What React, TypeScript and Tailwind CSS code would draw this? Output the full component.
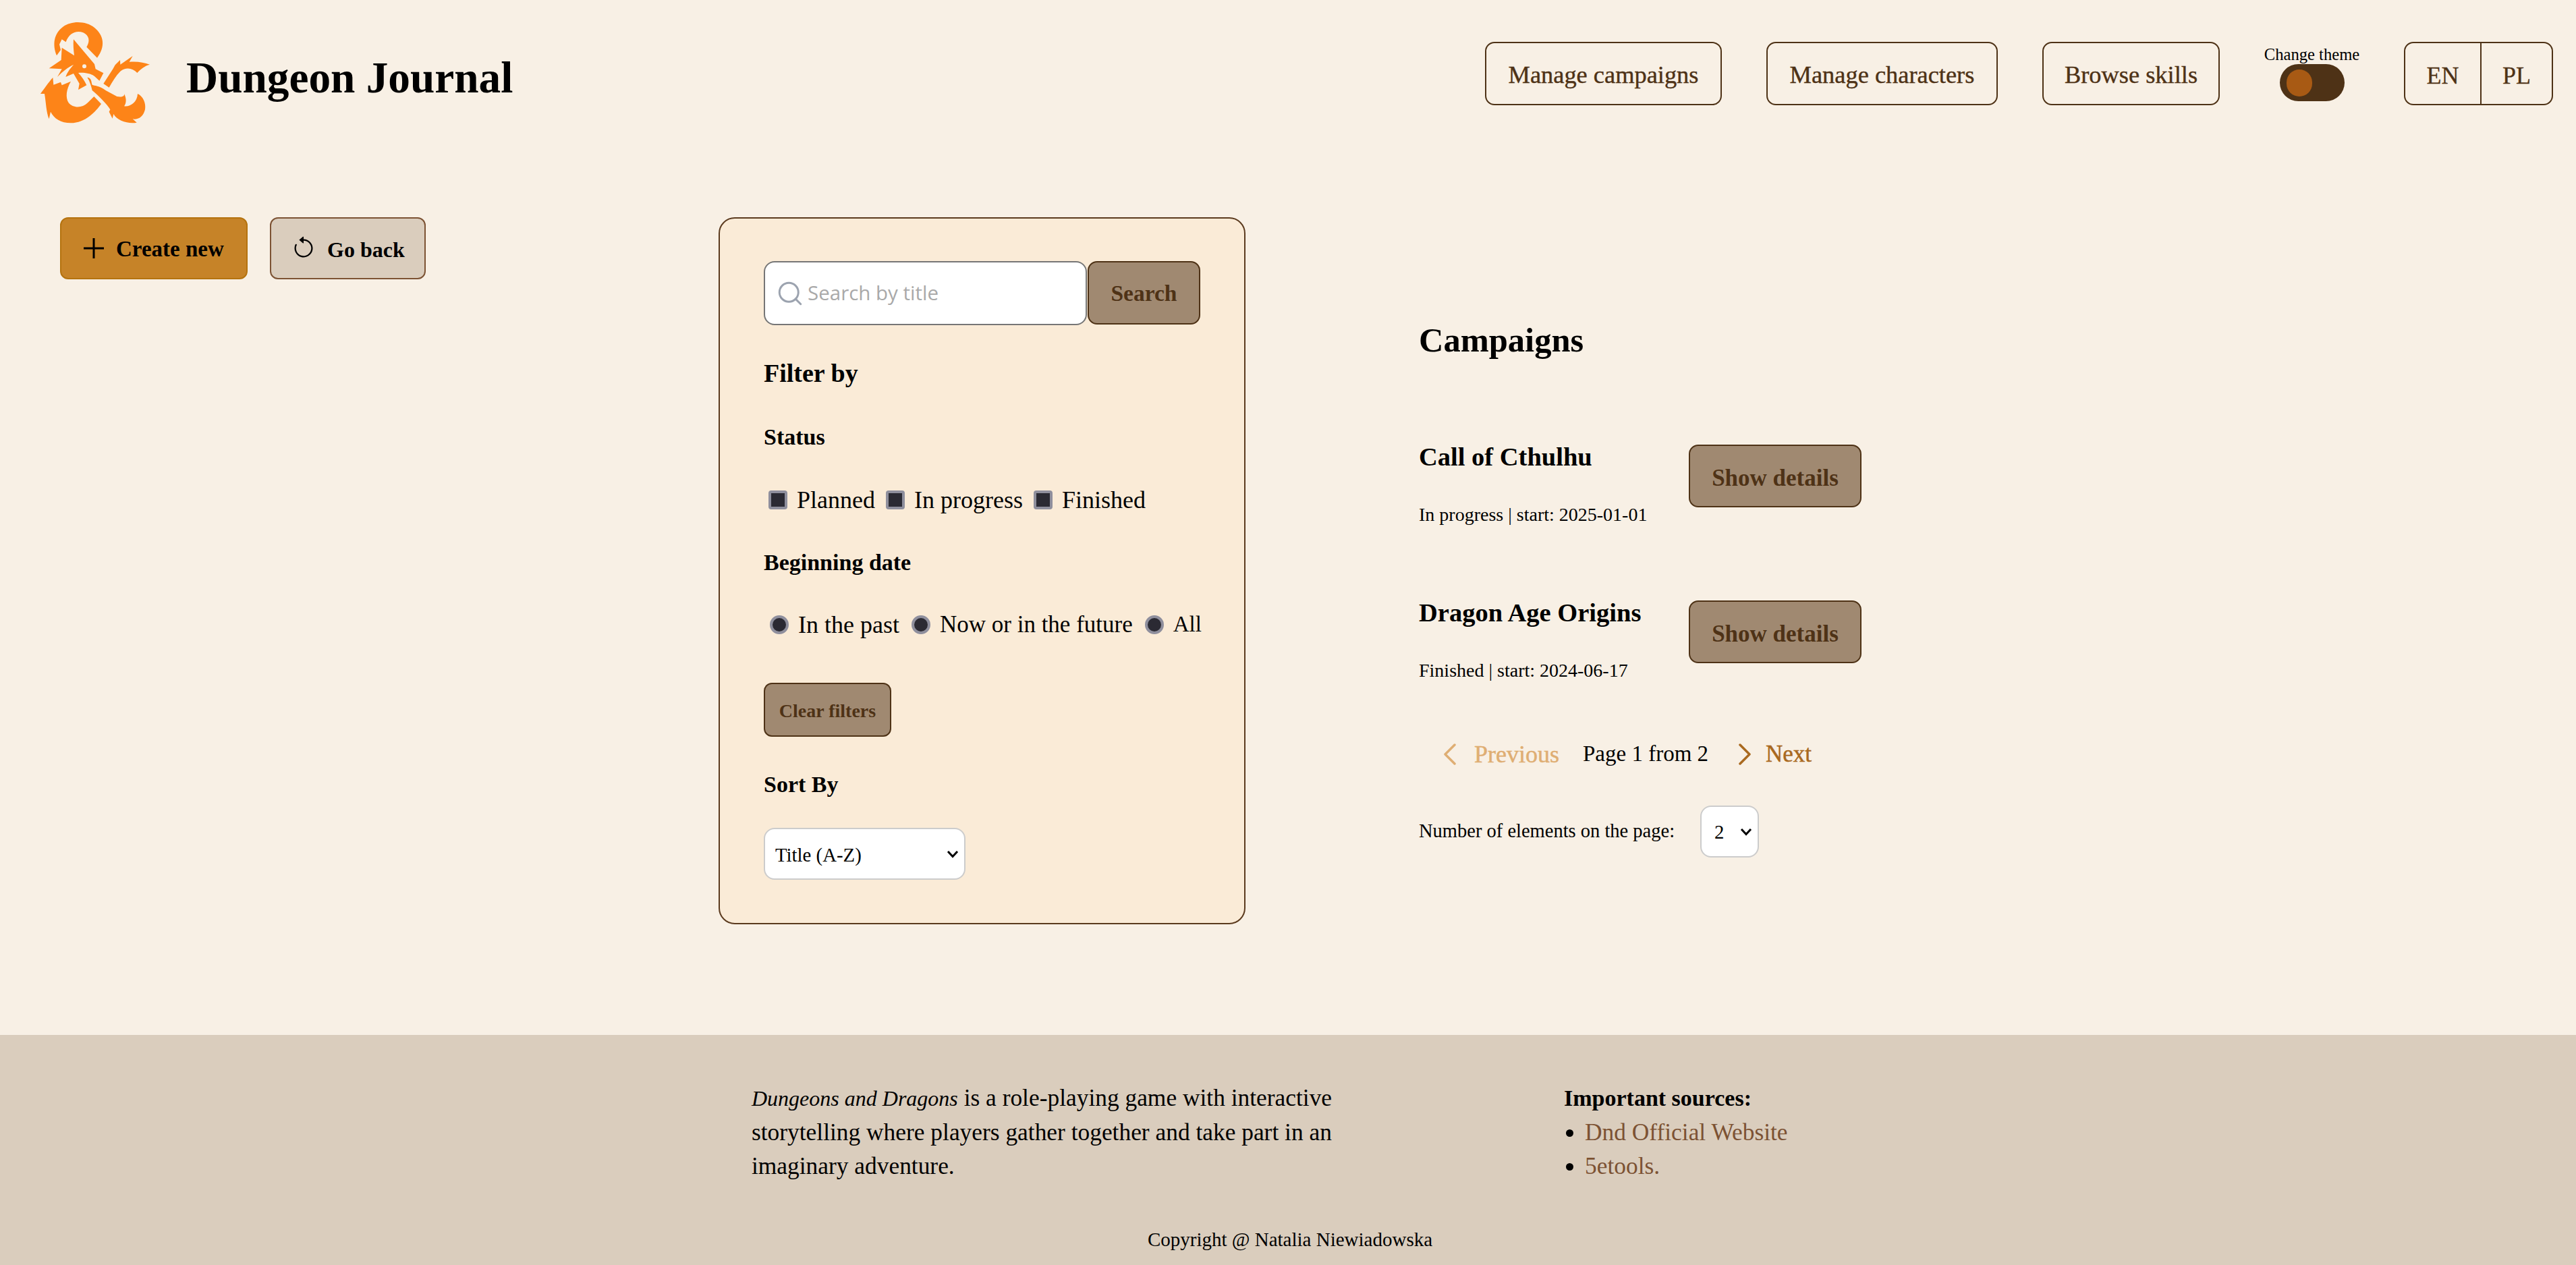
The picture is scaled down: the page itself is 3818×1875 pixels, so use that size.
import React from "react";
import { Search } from "lucide-react";
import { BsArrowCounterclockwise } from "react-icons/bs";

function Logo() {
  return (
    <svg width="200" height="180" viewBox="0 0 600 540" className="shrink-0" fill="#fd8418">
      <path d="M132 190C112 140 120 92 160 62C200 34 262 36 300 66C342 100 350 150 312 200L265 152C282 125 276 100 250 88C220 76 186 90 173 130L155 118L144 140L150 165Z" />
      <path d="M207 118L300 228L305 250L340 268L322 302L300 282C280 268 252 265 228 267C245 285 256 302 265 322L228 342L233 315L207 270L172 285C180 262 195 245 207 231C185 240 160 260 135 285L155 250L98 247L152 210L155 155L210 190C207 165 205 140 207 118Z" />
      <path d="M115 288L118 320L150 308L155 322L195 305C175 340 170 375 185 400C205 425 245 425 270 400L298 372L330 405C305 440 260 490 195 490C150 490 120 470 105 440L98 472C85 440 85 400 78 360L60 360C75 340 95 310 115 288Z" />
      <path d="M268 287C290 290 285 310 290 320C300 325 320 322 350 345L400 372C420 376 435 372 432 360C445 385 440 405 432 415C455 420 490 400 492 360C515 370 530 400 525 430C518 460 495 478 470 472L488 488C450 495 400 480 385 450L380 470L365 440L370 430C355 405 320 370 290 345C285 325 280 305 268 287Z" />
      <path d="M340 315L382 250L392 232L414 210L415 230L470 192L455 218C490 215 520 220 546 230C525 235 505 250 490 267C470 245 440 240 415 260C395 280 380 305 365 332Z" />
      <circle cx="255" cy="238" r="9" fill="#f8f0e5" />
    </svg>
  );
}

function Plus() {
  return (
    <svg width="32" height="32" viewBox="0 0 32 32" className="shrink-0">
      <path d="M16 1V31M1 16H31" stroke="#000" strokeWidth="3" />
    </svg>
  );
}

function Chevron({ left, color }: { left?: boolean; color: string }) {
  return (
    <svg width="20" height="32" viewBox="0 0 20 32" className="shrink-0">
      <path d={left ? "M17 2L3 16L17 30" : "M3 2L17 16L3 30"} fill="none" stroke={color} strokeWidth="3.5" strokeLinecap="round" strokeLinejoin="round" />
    </svg>
  );
}

function SelectArrow() {
  return (
    <svg width="18" height="12" viewBox="0 0 18 12" className="pointer-events-none absolute right-[10px] top-[33px]">
      <path d="M2 2L9 9.5L16 2" fill="none" stroke="#000" strokeWidth="3" />
    </svg>
  );
}

function NavButton({ label, w }: { label: string; w: string }) {
  return (
    <button className={`${w} h-[94px] rounded-[14px] border-2 border-[#4e3216] pt-[5px] text-[36.4px] leading-none text-[#4e3216] [-webkit-text-stroke:0.4px]`}>
      {label}
    </button>
  );
}

function Check({ label, first }: { label: string; first?: boolean }) {
  return (
    <label className={`flex items-center gap-[14px] ${first ? "" : "ml-[16px]"}`}>
      <input type="checkbox" defaultChecked className="h-[28px] w-[28px] appearance-none rounded-[4px] border-[4px] border-[#8f8f9d] bg-[#2b2a33]" />
      <span>{label}</span>
    </label>
  );
}

function Radio({ label, size, first }: { label: string; size: string; first?: boolean }) {
  return (
    <label className={`flex items-center gap-[14px] ${first ? "" : "ml-[18px]"}`}>
      <input type="radio" defaultChecked className="h-[28px] w-[28px] appearance-none rounded-full border-[4px] border-[#8f8f9d] bg-[#2b2a33]" />
      <span className={size}>{label}</span>
    </label>
  );
}

function Campaign({ title, sub, className }: { title: string; sub: string; className: string }) {
  return (
    <div className={`flex items-start ${className}`}>
      <div className="w-[400px] shrink-0">
        <h3 className="text-[38.5px] font-bold leading-[50px] whitespace-nowrap">{title}</h3>
        <p className="mt-[41px] text-[28px] leading-[40px] whitespace-nowrap">{sub}</p>
      </div>
      <button className="mt-[7px] h-[93px] w-[256px] rounded-[14px] border-2 border-[#4e3216] bg-[#a08971] pt-[7px] text-[35px] font-bold text-[#4e3216]">
        Show details
      </button>
    </div>
  );
}

export default function App() {
  return (
    <div className="flex h-[1875px] flex-col bg-[#f8f0e5] font-['Liberation_Serif',serif] text-black">
      <header className="flex h-[218px] shrink-0 items-center justify-between pl-[40px] pr-[34px]">
        <div className="flex items-center gap-[36px]">
          <Logo />
          <h1 className="mt-[14px] text-[65.3px] font-bold leading-none whitespace-nowrap">Dungeon Journal</h1>
        </div>
        <nav className="flex items-center gap-[66px]">
          <NavButton label="Manage campaigns" w="w-[351px]" />
          <NavButton label="Manage characters" w="w-[343px]" />
          <NavButton label="Browse skills" w="w-[263px]" />
          <div className="flex w-[141px] flex-col items-center">
            <span className="-mt-[2px] text-[24.6px] leading-[29px] whitespace-nowrap">Change theme</span>
            <div className="flex h-[55px] w-[96px] items-center rounded-full bg-[#4e3216] pl-[10px]">
              <div className="h-[40px] w-[38px] rounded-full bg-[#a85a14]" />
            </div>
          </div>
          <div className="flex h-[94px] w-[221px] rounded-[14px] border-2 border-[#4e3216] text-[36px] text-[#4e3216] [-webkit-text-stroke:0.3px]">
            <button className="w-[113px] border-r-2 border-[#4e3216] pt-[5px]">EN</button>
            <button className="flex-1 pt-[5px]">PL</button>
          </div>
        </nav>
      </header>

      <main className="flex flex-1 items-start pt-[104px]">
        <div className="flex w-[1065px] shrink-0 gap-[33px] pl-[89px]">
          <button className="flex h-[92px] w-[278px] items-center gap-[17px] rounded-[12px] border-2 border-[#b5730f] bg-[#c68328] pl-[32px] text-[33px] font-bold">
            <Plus />
            <span className="pt-[3px]">Create new</span>
          </button>
          <button className="flex h-[92px] w-[231px] items-center gap-[17px] rounded-[12px] border-2 border-[#7c5233] bg-[#dacdbd] pl-[30px] text-[32px] font-bold">
            <BsArrowCounterclockwise size={36} />
            <span className="pt-[3px]">Go back</span>
          </button>
        </div>

        <section className="h-[1048px] w-[781px] shrink-0 rounded-[24px] border-2 border-[#5b3a1e] bg-[#faebd7] px-[65px] pt-[63px]">
          <div className="flex gap-[1px]">
            <div className="flex h-[95px] w-[479px] items-center gap-[5px] rounded-[16px] border-2 border-[#767676] bg-white pl-[16px]">
              <Search size={42} strokeWidth={1.7} color="#9ca3af" className="shrink-0" />
              <span className="font-['Open_Sans',sans-serif] text-[29.5px] text-[#a9a9a9]">Search by title</span>
            </div>
            <button className="h-[94px] w-[167px] rounded-[14px] border-2 border-[#4e3216] bg-[#a08971] pt-[3px] text-[33.5px] font-bold text-[#4e3216]">Search</button>
          </div>
          <h2 className="mt-[46px] text-[38px] font-bold leading-[50px]">Filter by</h2>
          <h3 className="mt-[50px] text-[34px] font-bold leading-[40px]">Status</h3>
          <div className="mt-[53px] flex h-[40px] items-center pl-[7px] text-[36px] whitespace-nowrap">
            <Check label="Planned" first />
            <Check label="In progress" />
            <Check label="Finished" />
          </div>
          <h3 className="mt-[53px] text-[34px] font-bold leading-[40px]">Beginning date</h3>
          <div className="mt-[52px] flex h-[40px] items-center pl-[9px] text-[36px] whitespace-nowrap">
            <Radio label="In the past" size="text-[36px]" first />
            <Radio label="Now or in the future" size="text-[35px]" />
            <Radio label="All" size="text-[33px]" />
          </div>
          <button className="mt-[66px] block h-[80px] w-[189px] rounded-[12px] border-2 border-[#4e3216] bg-[#a08971] pt-[3px] text-[28px] font-bold text-[#4e3216]">Clear filters</button>
          <h3 className="mt-[51px] text-[34px] font-bold leading-[40px]">Sort By</h3>
          <div className="relative mt-[44px] h-[77px] w-[299px]">
            <select className="block h-[77px] w-[299px] appearance-none rounded-[16px] border-2 border-[#cccccc] bg-white pl-[15px] pt-[5px] text-[28.8px]">
              <option>Title (A-Z)</option>
            </select>
            <SelectArrow />
          </div>
        </section>

        <section className="ml-[257px] pt-[152px]">
          <h2 className="text-[50.5px] font-bold leading-[60px]">Campaigns</h2>
          <Campaign className="mt-[118px]" title="Call of Cthulhu" sub="In progress | start: 2025-01-01" />
          <Campaign className="mt-[100px]" title="Dragon Age Origins" sub="Finished | start: 2024-06-17" />
          <div className="mt-[79px] flex h-[50px] items-center pl-[36px] text-[35px] whitespace-nowrap">
            <Chevron left color="#dfae73" />
            <span className="ml-[26px] text-[36px] text-[#dfae73] [-webkit-text-stroke:0.5px]">Previous</span>
            <span className="ml-[35px] text-[33px]">Page 1 from 2</span>
            <span className="ml-[44px]"><Chevron color="#a9691f" /></span>
            <span className="ml-[21px] text-[#a9691f] [-webkit-text-stroke:0.5px]">Next</span>
          </div>
          <div className="mt-[51px] flex items-center gap-[38px]">
            <span className="text-[28.5px] whitespace-nowrap">Number of elements on the page:</span>
            <div className="relative h-[77px] w-[87px]">
              <select className="block h-[77px] w-[87px] appearance-none rounded-[16px] border-2 border-[#cccccc] bg-white pl-[19px] pt-[3px] text-[28.8px]">
                <option>2</option>
              </select>
              <SelectArrow />
            </div>
          </div>
        </section>
      </main>

      <footer className="h-[341px] shrink-0 bg-[#dacdbd] pt-[68px]">
        <div className="flex pl-[1114px] text-[35.4px] leading-[50px]">
          <p className="w-[1204px] shrink-0 whitespace-nowrap">
            <em className="text-[32px]">Dungeons and Dragons</em> is a role-playing game with interactive<br />
            storytelling where players gather together and take part in an<br />
            imaginary adventure.
          </p>
          <div>
            <strong className="text-[34px]">Important sources:</strong>
            <ul className="list-disc pl-[31px] marker:text-black">
              <li className="text-[#7c5233]">Dnd Official Website</li>
              <li className="text-[#7c5233]">5etools.</li>
            </ul>
          </div>
        </div>
        <p className="mt-[64px] pl-[6px] text-center text-[29px] leading-[40px]">Copyright @ Natalia Niewiadowska</p>
      </footer>
    </div>
  );
}
